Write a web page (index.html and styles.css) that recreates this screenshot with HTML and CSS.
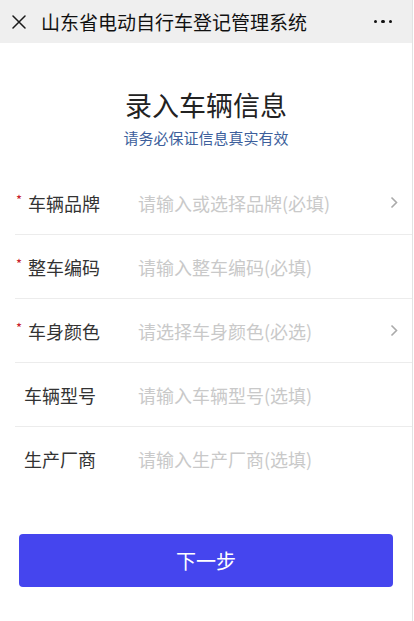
FILE: index.html
```html
<!DOCTYPE html>
<html lang="zh-CN">
<head>
<meta charset="utf-8">
<meta name="viewport" content="width=device-width, initial-scale=1">
<title>录入车辆信息</title>
<link rel="stylesheet" href="styles.css">
</head>
<body>
<div class="page">
  <header class="topbar">
    <svg class="close" viewBox="0 0 14 14" width="14" height="14" aria-hidden="true">
      <path d="M1 1 L13 13 M13 1 L1 13" stroke="#1a1a1a" stroke-width="1.5" fill="none" stroke-linecap="round"/>
    </svg>
    <div class="topbar-title">山东省电动自行车登记管理系统</div>
    <div class="more"><span></span><span></span><span></span></div>
  </header>

  <main class="content">
    <h1 class="title">录入车辆信息</h1>
    <p class="subtitle">请务必保证信息真实有效</p>

    <ul class="form">
      <li class="row">
        <div class="label"><span class="star">*</span>车辆品牌</div>
        <div class="placeholder">请输入或选择品牌(必填)</div>
        <svg class="chev" viewBox="0 0 8 13" width="8" height="13" aria-hidden="true"><path d="M1.5 1.5 L6.5 6.5 L1.5 11.5" stroke="#aaaaaa" stroke-width="1.6" fill="none"/></svg>
      </li>
      <li class="row">
        <div class="label"><span class="star">*</span>整车编码</div>
        <div class="placeholder">请输入整车编码(必填)</div>
      </li>
      <li class="row">
        <div class="label"><span class="star">*</span>车身颜色</div>
        <div class="placeholder">请选择车身颜色(必选)</div>
        <svg class="chev" viewBox="0 0 8 13" width="8" height="13" aria-hidden="true"><path d="M1.5 1.5 L6.5 6.5 L1.5 11.5" stroke="#aaaaaa" stroke-width="1.6" fill="none"/></svg>
      </li>
      <li class="row">
        <div class="label optional">车辆型号</div>
        <div class="placeholder">请输入车辆型号(选填)</div>
      </li>
      <li class="row">
        <div class="label optional">生产厂商</div>
        <div class="placeholder">请输入生产厂商(选填)</div>
      </li>
    </ul>

    <div class="actions">
      <button class="next" type="button">下一步</button>
    </div>
  </main>
</div>
</body>
</html>
```

FILE: styles.css
```css
* { box-sizing: border-box; }
html, body { margin: 0; padding: 0; background: #fff; }
body {
  font-family: "Noto Sans CJK SC", "Noto Sans", sans-serif;
  color: #222;
}
.page {
  width: 413px;
  min-height: 621px;
  border-right: 1px solid #e2e2e2;
  background: #fff;
}
.topbar {
  height: 43px;
  background: #efefef;
  display: flex;
  align-items: center;
  padding: 0 20px 0 12px;
}
.close { flex: none; display: block; }
.topbar-title {
  margin-left: 15px;
  font-size: 19px;
  line-height: 24px;
  color: #111;
  flex: 1;
  white-space: nowrap;
}
.more { display: flex; gap: 4px; align-items: center; }
.more span {
  width: 3.5px; height: 3.5px; border-radius: 50%;
  background: #111;
}
.content { padding-top: 44px; }
.title {
  margin: 0;
  text-align: center;
  font-size: 27px;
  line-height: 36px;
  font-weight: 400;
  color: #222;
}
.subtitle {
  margin: 5px 0 0;
  text-align: center;
  font-size: 15px;
  line-height: 20px;
  color: #3d5f9c;
}
.form {
  list-style: none;
  margin: 23px 0 0 15px;
  padding: 0;
}
.row {
  height: 64px;
  display: flex;
  align-items: center;
  border-bottom: 1px solid #ececec;
  padding-right: 14px;
}
.row:last-child { border-bottom: none; height: 63px; }
.label {
  width: 123px;
  flex: none;
  font-size: 18px;
  line-height: 24px;
  color: #333;
  display: flex;
  align-items: center;
}
.label.optional { padding-left: 9px; }
.star {
  width: 13px;
  padding-left: 1px;
  color: #c8202c;
  font-size: 13px;
  line-height: 13px;
  position: relative;
  top: -3px;
}
.placeholder {
  flex: 1;
  font-size: 18px;
  line-height: 24px;
  color: #c9c9c9;
  white-space: nowrap;
}
.chev { flex: none; display: block; }
.actions { padding: 44px 19px 0; }
.next {
  display: block;
  width: 374px;
  height: 53px;
  border: none;
  border-radius: 4px;
  background: #4545ee;
  color: #fff;
  font-family: inherit;
  font-size: 20px;
  line-height: 53px;
  padding: 0;
}
```
